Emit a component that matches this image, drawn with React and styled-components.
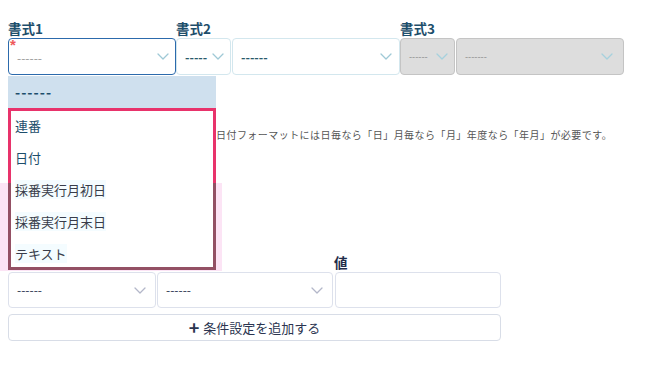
import React from "react";
import styled, { createGlobalStyle } from "styled-components";

const Global = createGlobalStyle`
  html, body { margin: 0; padding: 0; background: #fff; }
  body { font-family: "Noto Sans CJK JP", "Noto Sans", sans-serif; }
`;

const Page = styled.div`
  position: relative;
  width: 670px;
  height: 366px;
  padding: 21px 8px 0 8px;
  box-sizing: border-box;
  overflow: hidden;
`;

const TopRow = styled.div`
  display: flex;
  align-items: flex-start;
`;

const Group = styled.div`
  display: flex;
  flex-direction: column;
  width: ${(p) => p.$w}px;
`;

const Label = styled.div`
  font-size: 13.5px;
  font-weight: 700;
  line-height: 14px;
  height: 14px;
  margin-bottom: 3px;
  color: ${(p) => p.$color || "#1d4e6b"};
`;

const Selects = styled.div`
  display: flex;
  gap: 1px;
`;

const SelectBox = styled.div`
  position: relative;
  box-sizing: border-box;
  width: ${(p) => p.$w}px;
  height: ${(p) => p.$h || 37}px;
  display: flex;
  align-items: center;
  justify-content: space-between;
  padding: 0 ${(p) => p.$pr || 7}px 0 8px;
  border-radius: 4px;
  border: ${(p) =>
    p.$variant === "focus"
      ? "1.5px solid #2c6aac"
      : p.$variant === "disabled"
      ? "1px solid #c4c4c4"
      : p.$variant === "plain"
      ? "1px solid #dde1ec"
      : "1px solid #d3e7ee"};
  background: ${(p) => (p.$variant === "disabled" ? "#dddddd" : "#fff")};
`;

const Value = styled.span`
  font-size: ${(p) => p.$size || 13}px;
  font-weight: ${(p) => p.$weight || 400};
  color: ${(p) => p.$color};
  letter-spacing: ${(p) => p.$ls || 0}px;
  line-height: 1;
  margin-top: ${(p) => p.$mt || 0}px;
`;

const Asterisk = styled.span`
  position: absolute;
  left: 1px;
  top: 0;
  font-family: "Liberation Sans", Arial, sans-serif;
  font-size: 15px;
  font-weight: 700;
  color: #ee5a5a;
  line-height: 12px;
  height: 12px;
`;

const Chevron = ({ color }) => (
  <svg width="12" height="7" viewBox="0 0 12 7" style={{ flexShrink: 0 }}>
    <polyline points="1,1 6,6 11,1" fill="none" stroke={color} strokeWidth="1.3" strokeLinecap="round" strokeLinejoin="round" />
  </svg>
);

const Select = ({ w, h, variant, value, vColor, vSize, vWeight, chev, pr, asterisk, ls, mt }) => (
  <SelectBox $w={w} $h={h} $variant={variant} $pr={pr}>
    {asterisk && <Asterisk>*</Asterisk>}
    <Value $color={vColor} $size={vSize} $weight={vWeight} $ls={ls} $mt={mt}>{value}</Value>
    <Chevron color={chev} />
  </SelectBox>
);

const Help = styled.p`
  margin: 53px 0 0 208px;
  font-size: 10px;
  line-height: 14px;
  letter-spacing: 0.45px;
  color: #555;
  white-space: nowrap;
`;

const Bottom = styled.div`
  margin-top: 113px;
  display: grid;
  grid-template-columns: 148px 176px 167px;
  column-gap: 1px;
  width: 493px;
`;

const InputBox = styled.div`
  box-sizing: border-box;
  height: 36px;
  border: 1px solid #dde1ec;
  border-radius: 4px;
  background: #fff;
  margin-left: 1px;
`;

const AddButton = styled.button`
  margin-top: 6px;
  width: 493px;
  height: 27px;
  box-sizing: border-box;
  border: 1px solid #d8dde7;
  border-radius: 4px;
  background: #fff;
  display: flex;
  align-items: center;
  justify-content: center;
  gap: 4px;
  font-family: "Noto Sans CJK JP", "Noto Sans", sans-serif;
  font-size: 13px;
  color: #2b3550;
  padding: 0;
`;

const Plus = styled.span`
  font-size: 18px;
  font-weight: 700;
  line-height: 1;
  margin-top: -2px;
`;

/* Dropdown menu overlay */
const Tint = styled.div`
  position: absolute;
  left: 0;
  top: 183px;
  width: 222px;
  height: 88px;
  background: #fce4f5;
  z-index: 1;
`;

const Menu = styled.div`
  position: absolute;
  left: 8px;
  top: 76px;
  width: 208px;
  z-index: 2;
`;

const MenuHead = styled.div`
  height: 32px;
  background: #cfe0ee;
  display: flex;
  align-items: center;
  padding-left: 7px;
  font-size: 14px;
  font-weight: 700;
  color: #1d4e6b;
  letter-spacing: 1px;
`;

const MenuList = styled.div`
  box-sizing: border-box;
  height: 162px;
  padding: 3px;
  background-color: #935064;
  background-image: linear-gradient(to bottom, #e8336b 0px, #e8336b 75px, transparent 75px);
`;

const ListScroll = styled.div`
  height: 100%;
  overflow: hidden;
  background: #fff;
`;

const Item = styled.div`
  height: 32px;
  box-sizing: border-box;
  padding: 0 0 4px 4px;
  display: flex;
  align-items: center;
  font-size: 13px;
  color: ${(p) => (p.$dim ? "#383c4a" : "#1d4e6b")};
  span {
    background: ${(p) => (p.$dim ? "#f4fcff" : "transparent")};
  }
`;

const items = [
  { t: "連番" },
  { t: "日付" },
  { t: "採番実行月初日", dim: true },
  { t: "採番実行月末日", dim: true },
  { t: "テキスト", dim: true },
];

export default function App() {
  return (
    <>
      <Global />
      <Page>
        <TopRow>
          <Group $w={168}>
            <Label>書式1</Label>
            <Selects>
              <Select w={168} variant="focus" value="------" vColor="#9a9a9a" vSize={12} chev="#9fc9d6" pr={6} asterisk mt={2} />
            </Selects>
          </Group>
          <Group $w={224}>
            <Label>書式2</Label>
            <Selects>
              <Select w={55} value="-----" vColor="#2a5a6a" vWeight={700} vSize={12} chev="#9fc9d6" pr={6} />
              <Select w={168} value="------" vColor="#2a5a6a" vWeight={700} vSize={12} chev="#9fc9d6" pr={7} />
            </Selects>
          </Group>
          <Group $w={224}>
            <Label>書式3</Label>
            <Selects>
              <Select w={55} variant="disabled" value="------" vColor="#8a8a8a" vSize={9} chev="#a6d1dd" pr={6} />
              <Select w={168} variant="disabled" value="-------" vColor="#8a8a8a" vSize={9} chev="#a6d1dd" pr={10} />
            </Selects>
          </Group>
        </TopRow>

        <Help>日付フォーマットには日毎なら「日」月毎なら「月」年度なら「年月」が必要です。</Help>

        <Bottom>
          <Label />
          <Label />
          <Label $color="#1f2d4a">値</Label>
          <SelectBox $w={148} $h={36} $variant="plain" $pr={9}>
            <Value $color="#2b3550" $size={12}>------</Value>
            <Chevron color="#b3b7c9" />
          </SelectBox>
          <SelectBox $w={176} $h={36} $variant="plain" $pr={9}>
            <Value $color="#2b3550" $size={12}>------</Value>
            <Chevron color="#b3b7c9" />
          </SelectBox>
          <InputBox />
        </Bottom>
        <AddButton>
          <Plus>+</Plus>
          条件設定を追加する
        </AddButton>

        <Tint />
        <Menu>
          <MenuHead>------</MenuHead>
          <MenuList>
            <ListScroll>
              {items.map((it) => (
                <Item key={it.t} $dim={it.dim}>
                  <span>{it.t}</span>
                </Item>
              ))}
            </ListScroll>
          </MenuList>
        </Menu>
      </Page>
    </>
  );
}
